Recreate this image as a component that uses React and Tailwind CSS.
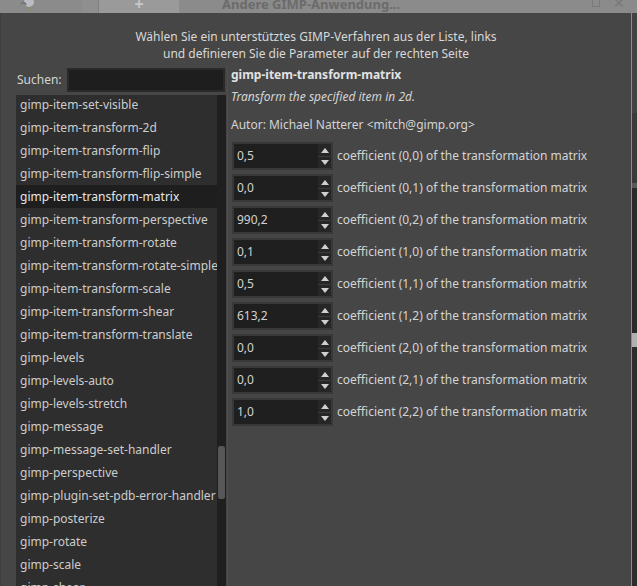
import React from "react";

const items = [
  "gimp-item-set-visible",
  "gimp-item-transform-2d",
  "gimp-item-transform-flip",
  "gimp-item-transform-flip-simple",
  "gimp-item-transform-matrix",
  "gimp-item-transform-perspective",
  "gimp-item-transform-rotate",
  "gimp-item-transform-rotate-simple",
  "gimp-item-transform-scale",
  "gimp-item-transform-shear",
  "gimp-item-transform-translate",
  "gimp-levels",
  "gimp-levels-auto",
  "gimp-levels-stretch",
  "gimp-message",
  "gimp-message-set-handler",
  "gimp-perspective",
  "gimp-plugin-set-pdb-error-handler",
  "gimp-posterize",
  "gimp-rotate",
  "gimp-scale",
  "gimp-shear",
];

const params = [
  ["0,5", "(0,0)"],
  ["0,0", "(0,1)"],
  ["990,2", "(0,2)"],
  ["0,1", "(1,0)"],
  ["0,5", "(1,1)"],
  ["613,2", "(1,2)"],
  ["0,0", "(2,0)"],
  ["0,0", "(2,1)"],
  ["1,0", "(2,2)"],
];

function Spin({ value }) {
  return (
    <div className="flex w-[101px] h-[28px] bg-[#383838] p-[2px]">
      <div className="flex-1 bg-[#1f1f1f] pl-[3px] leading-[24px] text-[#d2d2d2]">{value}</div>
      <div className="w-[13px] flex flex-col bg-[#262626]">
        <div className="h-[12px] flex items-center justify-center">
          <svg width="8" height="5" viewBox="0 0 8 5"><path d="M0 5 L4 0 L8 5 Z" fill="#d0d0d0" /></svg>
        </div>
        <div className="h-[1px] bg-[#3a3a3a]" />
        <div className="flex-1 flex items-center justify-center">
          <svg width="8" height="5" viewBox="0 0 8 5"><path d="M0 0 L8 0 L4 5 Z" fill="#d0d0d0" /></svg>
        </div>
      </div>
    </div>
  );
}

export default function App() {
  return (
    <div
      className="w-[637px] h-[586px] overflow-hidden bg-[#3b3b3b] text-[12px] flex flex-col"
      style={{ fontFamily: '"Noto Sans", "DejaVu Sans", sans-serif' }}
    >
      {/* background window title bar */}
      <div className="h-[13px] flex bg-[#8b8b8b] overflow-hidden shrink-0">
        <div className="w-[82px] flex items-start pl-[20px]">
          <svg width="16" height="12" viewBox="0 0 16 12">
            <circle cx="9" cy="2" r="5" fill="#b9bcc2" />
            <rect x="7" y="7" width="4" height="4" fill="#8e8a76" />
            <path d="M1 4 Q4 1 6 5" stroke="#777" strokeWidth="2" fill="none" />
          </svg>
        </div>
        <div className="w-[17px] bg-[#8f8f8f] border-r border-[#7f7f7f]" />
        <div className="w-[80px] bg-[#9a9a9a] flex justify-center">
          <span className="text-[#c8c8c8] text-[16px] leading-[8px] font-bold">+</span>
        </div>
        <div className="flex-1 relative">
          <span className="absolute left-[43px] top-[-4px] text-[13px] leading-[17px] font-bold text-[#6b6b6b] whitespace-nowrap">
            Andere GIMP-Anwendung...
          </span>
          <div className="absolute left-[413px] top-[-1px] w-[8px] h-[8px] border border-[#7a7a7a]" />
          <span className="absolute left-[434px] top-[-5px] text-[14px] text-[#777] leading-[16px]">✕</span>
        </div>
      </div>

      <div className="flex flex-1 min-h-0">
        {/* dialog */}
        <div className="w-[632px] bg-[#464646] border-l border-[#3e3e3e] border-r border-r-[#8a8a8a] flex flex-col text-[#d4d4d4]">
          <div className="pt-[15px] text-center leading-[17px] text-[#d8d8d8]">
            <div>Wählen Sie ein unterstütztes GIMP-Verfahren aus der Liste, links</div>
            <div>und definieren Sie die Parameter auf der rechten Seite</div>
          </div>

          <div className="flex flex-1 min-h-0 mt-[4px]">
            {/* left column */}
            <div className="ml-[15px] w-[210px] flex flex-col">
              <div className="h-[27px] flex items-center">
                <span className="w-[51px] pl-[1px] text-[#d4d4d4]">Suchen:</span>
                <div className="w-[158px] h-[24px] bg-[#1e1e1e] border-2 border-[#2a2a2a]" />
              </div>
              <div className="mt-[2px] flex-1 min-h-0 flex bg-[#2e2e2e] overflow-hidden">
                <div className="flex-1 overflow-hidden">
                  <div className="mt-[-2px]">
                    {items.map((it, i) => (
                      <div
                        key={i}
                        className={
                          "h-[23px] leading-[23px] pl-[4px] whitespace-nowrap " +
                          (i === 4 ? "bg-[#1e1e1e] text-[#e6e6e6]" : "text-[#cccccc]")
                        }
                      >
                        {it}
                      </div>
                    ))}
                  </div>
                </div>
                <div className="w-[9px] bg-[#1f1f1f] pt-[351px] px-[1px]">
                  <div className="h-[53px] bg-[#575757] rounded-[2px]" />
                </div>
              </div>
            </div>

            {/* right column */}
            <div className="ml-[1px] flex-1 border-l border-[#4e4e4e] pl-[3px] flex flex-col">
              <div className="leading-[18px] font-bold text-[#e2e2e2]">gimp-item-transform-matrix</div>
              <div className="mt-[4px] leading-[18px] italic text-[#d4d4d4]">Transform the specified item in 2d.</div>
              <div className="mt-[10px] leading-[18px] text-[#d4d4d4]">Autor: Michael Natterer &lt;mitch@gimp.org&gt;</div>
              <div className="mt-[8px] flex flex-col gap-[4px]">
                {params.map(([v, c], i) => (
                  <div key={i} className="flex items-center">
                    <div className="ml-[1px]">
                      <Spin value={v} />
                    </div>
                    <span className="ml-[4px] text-[#d4d4d4] whitespace-nowrap">
                      coefficient {c} of the transformation matrix
                    </span>
                  </div>
                ))}
              </div>
            </div>
          </div>
        </div>
        {/* right background strip */}
        <div className="flex-1 bg-[#3c3c3c] flex flex-col">
          <div className="h-[100px] bg-[#434343]" />
          <div className="h-[70px] bg-[#3a3a3a]" />
          <div className="h-[5px] bg-[#5a5a5a]" />
          <div className="h-[145px] bg-[#2a2a2a]" />
          <div className="h-[14px] bg-[#b0b0b0]" />
          <div className="flex-1 bg-[#2d2d2d]" />
        </div>
      </div>
    </div>
  );
}
